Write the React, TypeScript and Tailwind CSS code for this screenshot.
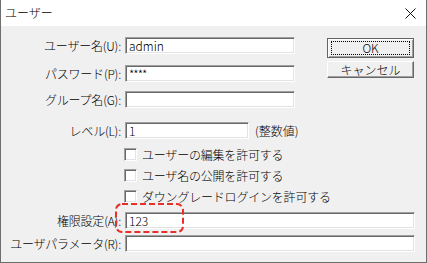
import React from 'react';

const font = "font-['Noto_Sans_CJK_JP','Noto_Sans',sans-serif]";

function Field({ value, w, mono }: { value?: string; w: string; mono?: boolean }) {
  return (
    <div
      className={`${w} h-[17px] shrink-0 bg-white border border-t-[#a0a0a0] border-l-[#a0a0a0] border-b-white border-r-white shadow-[inset_1px_1px_0_#696969,inset_-1px_-1px_0_#e3e3e3] flex items-center pl-[3px] text-[12px] leading-none text-black ${mono ? 'tracking-[-1px]' : ''}`}
    >
      {value}
    </div>
  );
}

function Row({ label, children }: { label: string; children: React.ReactNode }) {
  return (
    <div className="flex items-center gap-[4px]">
      <span className="w-[120px] shrink-0 text-right text-[12px] leading-[17px] whitespace-nowrap tracking-[-0.2px]">{label}</span>
      {children}
    </div>
  );
}

function Check({ label }: { label: string }) {
  return (
    <div className="flex items-center h-[13px] pl-[123px] gap-[5px]">
      <span className="w-[13px] h-[13px] shrink-0 bg-white border border-t-[#a0a0a0] border-l-[#a0a0a0] border-b-white border-r-white shadow-[inset_1px_1px_0_#696969,inset_-1px_-1px_0_#e3e3e3]" />
      <span className="text-[12px] leading-none whitespace-nowrap tracking-[-0.2px]">{label}</span>
    </div>
  );
}

function Btn({ label, primary }: { label: string; primary?: boolean }) {
  return (
    <button
      className={`w-[87px] flex items-center justify-center bg-[#f0f0f0] text-[12px] leading-none ${
        primary
          ? 'h-[20px] border border-[#646464] shadow-[inset_1px_1px_0_#fff,inset_-1px_-1px_0_#a0a0a0]'
          : 'h-[17px] border border-t-white border-l-white border-b-[#696969] border-r-[#696969] shadow-[inset_-1px_-1px_0_#a0a0a0]'
      }`}
    >
      {primary ? (
        <span className="w-[79px] h-[14px] border border-dotted border-black flex items-center justify-center">{label}</span>
      ) : (
        label
      )}
    </button>
  );
}

export default function App() {
  return (
    <div className={`w-[427px] h-[263px] bg-[#f0f0f0] border-x border-b border-[#6e6e6e] flex flex-col text-black font-light ${font}`}>
      <div className="h-[26px] bg-white flex items-center justify-between pl-[4px] pr-[8px] shrink-0">
        <span className="text-[12px] leading-none">ユーザー</span>
        <svg width="11" height="11" viewBox="0 0 11 11" className="mr-[2px]">
          <path d="M0.5 0.5 L10.5 10.5 M10.5 0.5 L0.5 10.5" stroke="#111" strokeWidth="1" />
        </svg>
      </div>

      <div className="relative flex flex-col">
        <div className="flex">
          <div className="flex flex-col w-[326px] shrink-0">
            <div className="mt-[11px]">
              <Row label="ユーザー名(U):">
                <Field value="admin" w="w-[170px]" />
              </Row>
            </div>
            <div className="mt-[11px]">
              <Row label="パスワード(P):">
                <Field value="****" w="w-[170px]" mono />
              </Row>
            </div>
            <div className="mt-[9px]">
              <Row label="グループ名(G):">
                <Field w="w-[170px]" />
              </Row>
            </div>
            <div className="mt-[14px]">
              <Row label="レベル(L):">
                <Field value="1" w="w-[124px]" />
                <span className="ml-[2px] text-[12px] leading-none">(整数値)</span>
              </Row>
            </div>
            <div className="mt-[9px]">
              <Check label="ユーザーの編集を許可する" />
            </div>
            <div className="mt-[8px]">
              <Check label="ユーザ名の公開を許可する" />
            </div>
            <div className="mt-[8px]">
              <Check label="ダウングレードログインを許可する" />
            </div>
          </div>
          <div className="flex flex-col gap-[3px] mt-[12px]">
            <Btn label="OK" primary />
            <Btn label="キャンセル" />
          </div>
        </div>

        <div className="mt-[9px]">
          <Row label="権限設定(A):">
            <Field value="123" w="w-[290px]" />
          </Row>
        </div>
        <div className="mt-[6px]">
          <Row label="ユーザパラメータ(R):">
            <Field w="w-[290px]" />
          </Row>
        </div>

        <svg width="69" height="30" className="absolute left-[114px] top-[177px] pointer-events-none">
          <rect x="1" y="1" width="67" height="28" rx="6" fill="none" stroke="#e8302a" strokeWidth="2" strokeDasharray="6 3" />
        </svg>
      </div>
    </div>
  );
}
